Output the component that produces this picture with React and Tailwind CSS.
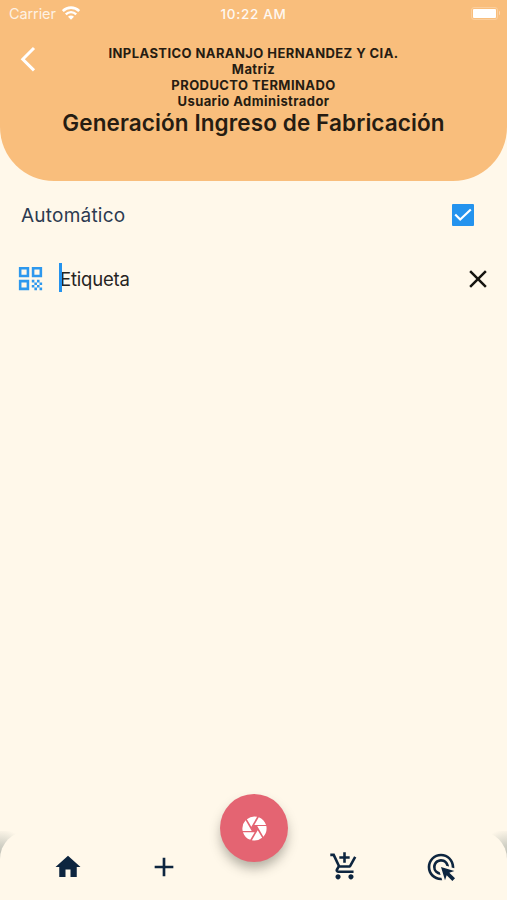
import React from "react";
import {
  MdAdd,
  MdAdsClick,
  MdCamera,
  MdClose,
  MdHome,
  MdOutlineAddShoppingCart,
  MdQrCode,
} from "react-icons/md";

const StatusBar = () => (
  <div className="flex h-7 items-center justify-between pl-[9px] pr-[7px] text-white">
    <div className="flex w-[120px] items-center gap-[6px]">
      <span className="text-[14.5px] tracking-[-0.1px] opacity-80">Carrier</span>
      <svg width="18" height="14" viewBox="0 0 18 14" fill="none" className="-translate-y-px">
        <path d="M.8 5C5.5.6 12.5.6 17.2 5" stroke="white" strokeWidth="2.7" />
        <path d="M3.8 8.3c3-2.9 7.4-2.9 10.4 0" stroke="white" strokeWidth="2.4" />
        <path d="M6 10.8c1.8-1.6 4.2-1.6 6 0l-3 3z" fill="white" />
      </svg>
    </div>
    <span className="-ml-[2px] text-[13.5px] font-medium tracking-[0.7px] opacity-90">
      10:22 AM
    </span>
    <div className="flex w-[120px] items-center justify-end gap-px">
      <div className="h-[13px] w-[27px] -translate-y-px rounded-[3px] border border-white/25 p-px">
        <div className="h-full rounded-[1px] bg-white" />
      </div>
      <div className="h-1 w-px -translate-y-px rounded-r bg-white/40" />
    </div>
  </div>
);

const Header = () => (
  <header className="h-[181px] rounded-b-[54px] bg-[#f9be7c]">
    <StatusBar />
    <div className="flex pt-[17px] text-[#261c12]">
      <button className="ml-5 mt-[1px] h-6 w-4">
        <svg width="16" height="26" viewBox="0 0 16 26" fill="none">
          <path d="M14 2 2.8 13.2 14 24.4" stroke="white" strokeWidth="3" />
        </svg>
      </button>
      <div className="mr-9 flex-1 text-center text-[13px] font-bold leading-4">
        <p className="tracking-[0.42px]">INPLASTICO NARANJO HERNANDEZ Y CIA.</p>
        <p className="tracking-[0.42px]">Matriz</p>
        <p className="tracking-[0.42px]">PRODUCTO TERMINADO</p>
        <p className="tracking-[0.42px]">Usuario Administrador</p>
        <h1 className="text-[22.5px] font-semibold leading-[28px] tracking-[0.1px]">
          Generación Ingreso de Fabricación
        </h1>
      </div>
    </div>
  </header>
);

const BottomBar = () => (
  <footer className="relative h-[69px]">
    <div className="flex h-full flex-col bg-[radial-gradient(circle_at_0_28px,#b9bab0_0,#d2d1c6_14px,#fff8ea_30px),radial-gradient(circle_at_100%_28px,#b9bab0_0,#d2d1c6_14px,#fff8ea_30px)] bg-[length:50%_100%] bg-[position:left,right] bg-no-repeat">
      <nav className="flex h-full items-center rounded-t-[28px] bg-[#fff8ea] pt-[2px] text-[#0d253f]">
        <MdHome size={30} className="ml-[53px]" />
        <MdAdd size={32} className="ml-[65px]" />
        <MdOutlineAddShoppingCart size={31} className="ml-[149px]" />
        <MdAdsClick size={32} className="ml-[65px]" />
      </nav>
    </div>
    <button className="absolute -top-[37px] left-[220px] flex h-[68px] w-[68px] items-center justify-center rounded-full bg-[#e46472] text-white shadow-[0_7px_12px_-1px_rgba(60,60,50,0.4)]">
      <MdCamera size={29} />
    </button>
  </footer>
);

const App = () => {
  return (
    <div className="flex h-[900px] w-[507px] flex-col overflow-hidden bg-[#fff8ea] font-['Inter',sans-serif]">
      <Header />
      <main className="flex-1">
        <div className="flex h-[68px] items-center justify-between pl-[21px] pr-[33px]">
          <span className="mt-[2px] text-[19px] tracking-[0.22px] text-[#2c3a50]">
            Automático
          </span>
          <div className="flex h-[22px] w-[22px] items-center justify-center rounded-[1px] bg-[#2493ee]">
            <svg width="18" height="14" viewBox="0 0 18 14" fill="none">
              <path d="m1.2 6.5 5 5L16.8 1.5" stroke="white" strokeWidth="2.2" />
            </svg>
          </div>
        </div>
        <div className="flex h-[60px] items-center pl-[15px] pr-[14px]">
          <MdQrCode size={31} className="-translate-y-px text-[#2d98ee]" />
          <div className="ml-[13px] h-[29px] w-[3px] -translate-y-[2px] bg-[#2493ee]" />
          <span className="-ml-[2px] mt-px flex-1 text-[18.5px] tracking-[-0.2px] text-[#26231f]">
            Etiqueta
          </span>
          <MdClose size={30} className="text-[#15140f]" />
        </div>
      </main>
      <BottomBar />
    </div>
  );
};

export default App;
